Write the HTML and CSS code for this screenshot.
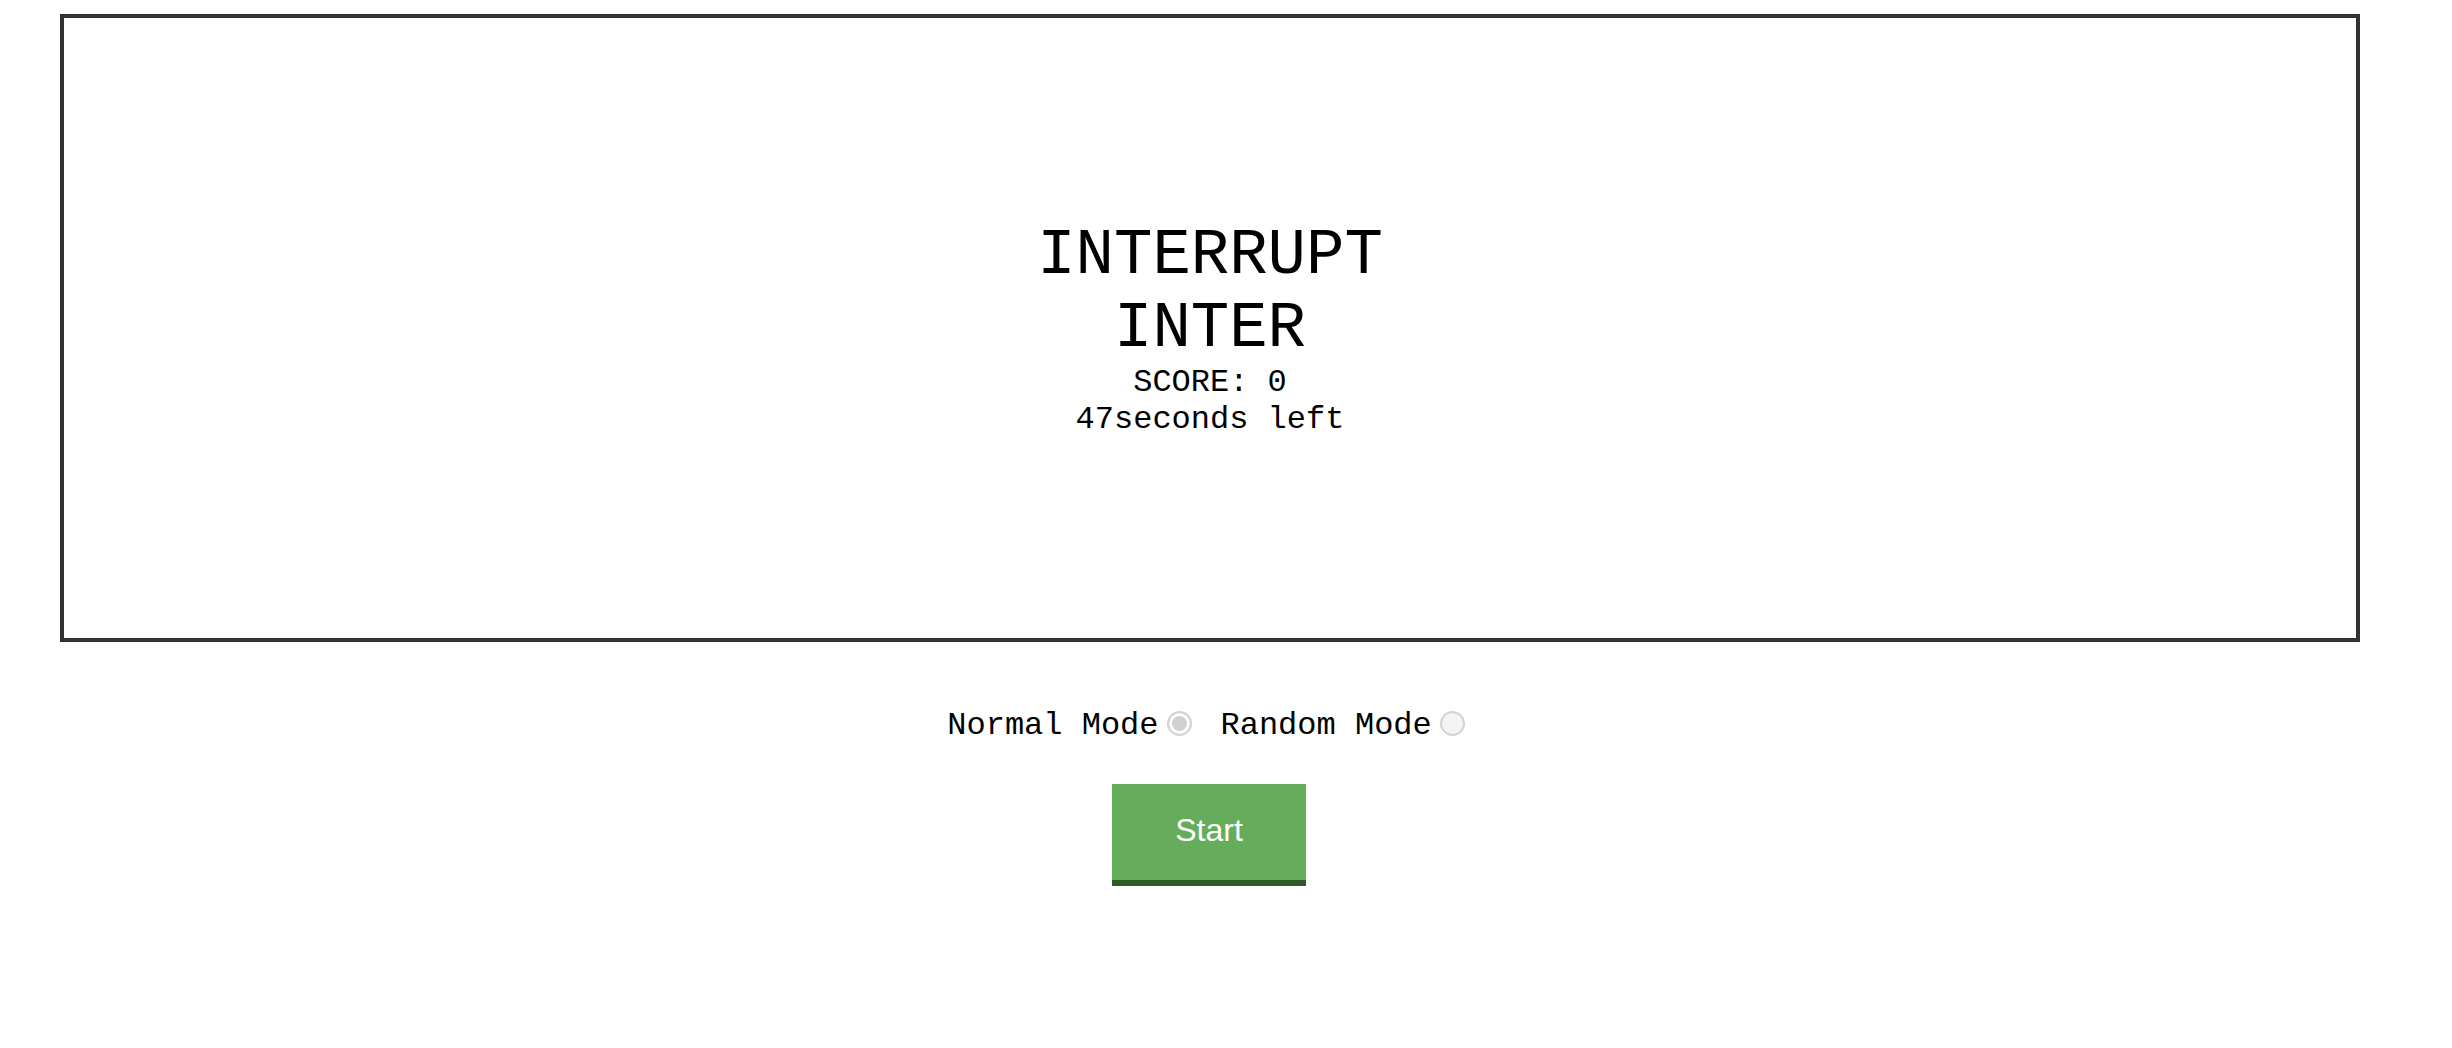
FILE: index.html
```html
<!DOCTYPE html>
<html>
<head>
<meta charset="utf-8">
<link rel="stylesheet" href="styles.css">
</head>
<body>
<div class="wrap">
  <div class="board">
    <div class="word">INTERRUPT</div>
    <div class="word">INTER</div>
    <div class="info">SCORE: 0</div>
    <div class="info">47seconds left</div>
  </div>
  <div class="modes">
    <label class="mode">Normal Mode<input type="radio" name="mode" class="radio radio-first" checked></label>
    <label class="mode">Random Mode<input type="radio" name="mode" class="radio"></label>
  </div>
  <div class="actions">
    <button class="start">Start</button>
  </div>
</div>
</body>
</html>
```

FILE: styles.css
```css
html, body {
  margin: 0;
  padding: 0;
  background: #ffffff;
}
body {
  font-family: "Liberation Mono", "Courier New", monospace;
  color: #000;
}
.wrap {
  width: 2300px;
  margin: 14px 0 0 60px;
}
.board {
  box-sizing: border-box;
  height: 628px;
  border: 4px solid #333333;
  display: flex;
  flex-direction: column;
  align-items: center;
  justify-content: center;
  padding-top: 2px;
}
.word {
  font-size: 64px;
  line-height: 1.133;
}
.info {
  font-size: 32px;
  line-height: 1.133;
}
.modes {
  display: flex;
  justify-content: center;
  align-items: center;
  margin-top: 66px;
  font-size: 32px;
  line-height: 36px;
  padding-right: 8px;
}
.mode {
  display: flex;
  align-items: center;
}
.radio {
  -webkit-appearance: none;
  appearance: none;
  box-sizing: border-box;
  width: 25px;
  height: 25px;
  margin: -6px 0 0 8px;
  border: 2px solid #d3d3d3;
  border-radius: 50%;
  background: #f4f4f4;
}
.radio:checked {
  background: #d0d0d0;
  box-shadow: inset 0 0 0 3px #ffffff;
}
.radio-first {
  margin-right: 29px;
}
.actions {
  display: flex;
  justify-content: center;
  margin-top: 40px;
}
.start {
  box-sizing: border-box;
  width: 194px;
  height: 102px;
  margin-left: -2px;
  background: #66ad5b;
  border: none;
  border-bottom: 6px solid #2e5b26;
  color: #ffffff;
  font-family: "Liberation Sans", Arial, sans-serif;
  font-size: 32px;
  padding: 0 0 4px 0;
}
```
